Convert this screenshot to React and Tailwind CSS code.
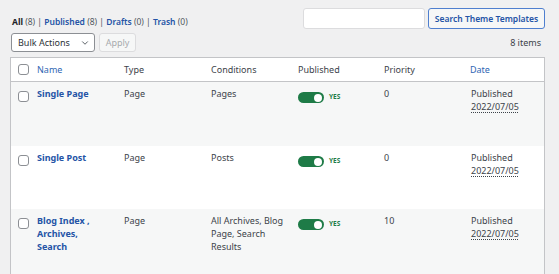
import { ChevronDown } from 'lucide-react'

const rows = [
  { name: ['Single Page'], type: 'Page', cond: 'Pages', priority: '0', bg: 'bg-[#f6f7f7]', h: 'h-[64px]' },
  { name: ['Single Post'], type: 'Page', cond: 'Posts', priority: '0', bg: 'bg-white', h: 'h-[63px]' },
  { name: ['Blog Index ,', 'Archives,', 'Search'], type: 'Page', cond: 'All Archives, Blog Page, Search Results', priority: '10', bg: 'bg-[#f6f7f7]', h: 'h-[70px]' },
]

const cols = 'grid grid-cols-[26px_87px_87px_87px_86px_86px_1fr]'

function Checkbox() {
  return <div className="w-[11px] h-[11px] rounded-[3px] border border-[#8c8f94] bg-white" />
}

function Toggle() {
  return (
    <div className="flex items-center gap-[5px] mt-[5px]">
      <div className="w-[26px] h-[11px] rounded-full bg-[#1e7b47] flex items-center justify-end pr-[2px]">
        <div className="w-[8px] h-[8px] rounded-full bg-white" />
      </div>
      <span className="text-[6.5px] font-bold text-[#1e7b47] leading-none">YES</span>
    </div>
  )
}

export default function App() {
  return (
    <div className="w-[559px] h-[274px] overflow-hidden bg-[#f0f0f1] pl-[10px] pr-[14px] text-[9px] leading-[13px] text-[#3c434a]"
      style={{ fontFamily: '"Noto Sans", "Open Sans", sans-serif' }}>

      {/* Status links + search */}
      <div className="flex justify-between items-start pt-[8px]">
        <div className="mt-[7px] ml-[2px] text-[8.5px] text-[#50575e]">
          <span className="font-bold text-[#1d2327]">All</span> (8) | <span className="font-semibold text-[#2454a6]">Published</span> (8) | <span className="font-semibold text-[#2454a6]">Drafts</span> (0) | <span className="font-semibold text-[#2454a6]">Trash</span> (0)
        </div>
        <div className="flex gap-[3px]">
          <div className="w-[122px] h-[21px] rounded-[3px] border border-[#dcdcde] bg-white" />
          <div className="w-[117px] h-[21px] rounded-[3px] border border-[#4f7fcf] bg-[#f6f7f7] flex items-center justify-center text-[8.5px] font-semibold text-[#2454a6]">
            Search Theme Templates
          </div>
        </div>
      </div>

      {/* Bulk actions row */}
      <div className="flex justify-between items-center mt-[4px] h-[19px]">
        <div className="flex gap-[4px] ml-[1px]">
          <div className="w-[84px] h-[19px] rounded-[3px] border border-[#8c8f94] bg-white flex items-center justify-between pl-[6px] pr-[4px] text-[#2c3338]">
            <span>Bulk Actions</span>
            <ChevronDown size={10} strokeWidth={2} className="text-[#3c434a]" />
          </div>
          <div className="w-[37px] h-[19px] rounded-[3px] border border-[#dcdcde] bg-[#f6f7f7] flex items-center justify-center text-[#a7aaad]">
            Apply
          </div>
        </div>
        <span className="pr-[4px] text-[#3c434a]">8 items</span>
      </div>

      {/* Table */}
      <div className="mt-[5px] border border-[#c3c4c7] bg-white">
        <div className={`${cols} h-[24px] items-center border-b border-[#c3c4c7]`}>
          <div className="pl-[7px]"><Checkbox /></div>
          <span className="text-[#2f66b3]">Name</span>
          <span>Type</span>
          <span>Conditions</span>
          <span>Published</span>
          <span>Priority</span>
          <span className="text-[#2f66b3]">Date</span>
        </div>

        {rows.map((r, i) => (
          <div key={i} className={`${cols} ${r.bg} ${r.h} items-start pt-[5px]`}>
            <div className="pl-[7px] pt-[4px]"><Checkbox /></div>
            <div className="font-bold text-[#2454a6] pr-[4px]">
              {r.name.map((n, j) => <div key={j}>{n}</div>)}
            </div>
            <span>{r.type}</span>
            <span className="pr-[4px]">{r.cond}</span>
            <Toggle />
            <span>{r.priority}</span>
            <div className="pl-[1px]">
              <div>Published</div>
              <div className="underline decoration-dotted underline-offset-2">2022/07/05</div>
            </div>
          </div>
        ))}
      </div>
    </div>
  )
}
